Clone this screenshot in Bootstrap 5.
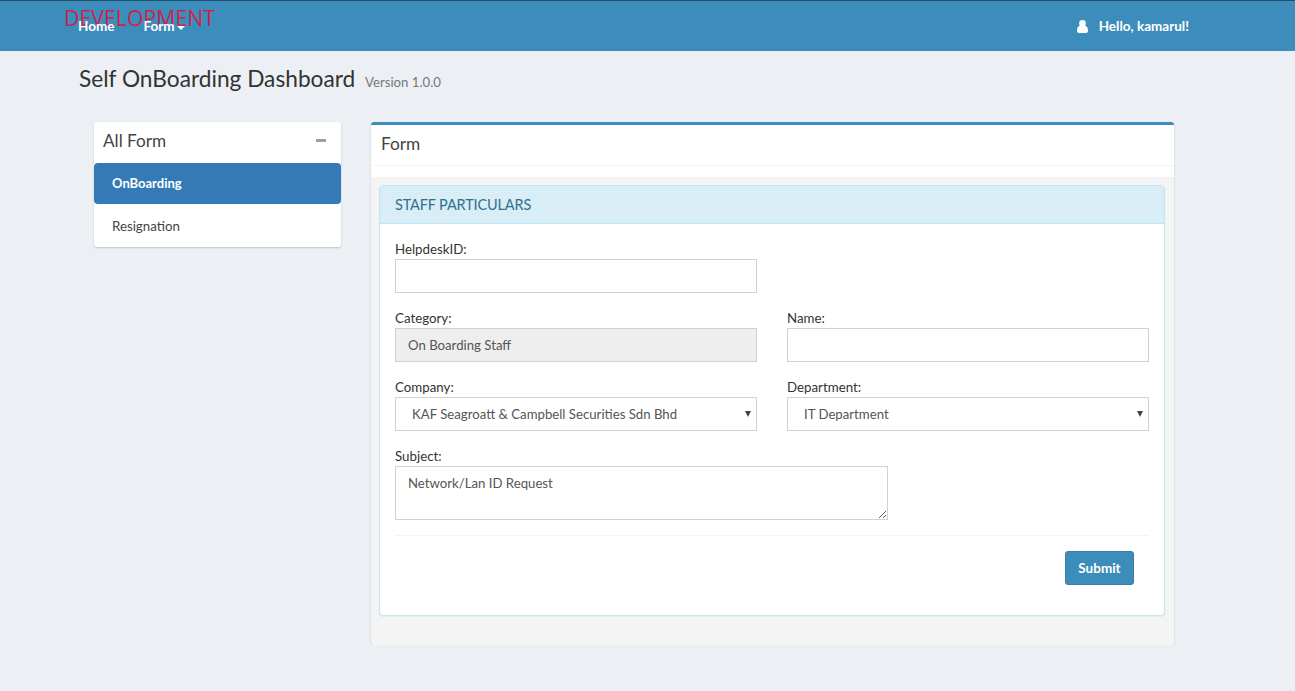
<!DOCTYPE html>
<html lang="en">
<head>
  <meta charset="UTF-8">
  <title>Self OnBoarding Dashboard</title>
  <link href="https://cdn.jsdelivr.net/npm/bootstrap@5.3.3/dist/css/bootstrap.min.css" rel="stylesheet">
  <style>
    body { background: #ecf0f5; color: #333; font-family: "Lato", "Liberation Sans", sans-serif; font-size: 14px; line-height: 20px; }
    .top-bar { height: 51px; background: #3c8dbc; border-top: 1px solid #1c4f6e; padding-left: 79px; padding-right: 106px; }
    .top-bar a { color: #fff; text-decoration: none; font-weight: 700; font-size: 13.5px; line-height: 20px; }
    .top-links { gap: 29px; padding-top: 15px; margin-left: -1px; position: relative; }
    .dev-tag { left: 64px; top: 5px; color: #c7254e; font-size: 21.3px; line-height: 24px; font-family: "Open Sans", sans-serif; }
    .caret-down { display: inline-block; border-top: 4px solid #fff; border-left: 4px solid transparent; border-right: 4px solid transparent; margin-left: 2px; vertical-align: middle; }
    .hello { padding-top: 15px; color: #fff; font-weight: 700; font-size: 13.5px; gap: 11px; }
    .page-title { padding: 14px 0 0 79px; height: 71px; }
    .page-title h1 { font-size: 22.7px; line-height: 28px; margin: 0; font-weight: 400; color: #333; }
    .page-title small { font-size: 13.2px; color: #777; margin-left: 4px; font-weight: 400; }
    .layout { padding-left: 94px; gap: 30px; align-items: flex-start; }
    .side-box { width: 247px; background: #fff; border-radius: 3px; box-shadow: 0 1px 2px rgba(0,0,0,.18); height: 125px; }
    .side-head { height: 41px; padding: 8px 15px 0 9px; font-size: 17.2px; line-height: 22px; color: #444; }
    .minus-mark { width: 10px; height: 3px; background: #97a0b3; margin-top: 9px; }
    .side-link { display: block; height: 41px; padding: 10px 18px; font-size: 13.3px; color: #444; text-decoration: none; }
    .side-link.on { background: #337ab7; color: #fff; font-size: 13px; font-weight: 700; border-radius: 4px; margin-bottom: 2px; }
    .main-box { width: 803px; height: 523px; background: #f4f4f4; border-top: 3px solid #3c8dbc; border-radius: 3px; box-shadow: 0 1px 2px rgba(0,0,0,.18); }
    .main-head { background: #fff; height: 52px; padding: 8px 10px 0; font-size: 17.3px; line-height: 22px; color: #444; }
    .main-head div { height: 33px; border-bottom: 1px solid #f4f4f4; margin: 0 -10px; padding: 0 10px; }
    .form-panel { margin: 8px 9px 0 8px; height: 431px; background: #fff; border: 1px solid #bce8f1; border-radius: 4px; box-shadow: 0 1px 1px rgba(0,0,0,.05); }
    .form-panel-head { height: 38px; background: #d9edf7; color: #31708f; font-size: 14.5px; letter-spacing: -.15px; line-height: 20px; padding: 9px 15px; border-bottom: 1px solid #bce8f1; }
    .form-panel-body { padding: 15px; }
    .form-panel-body .row { --bs-gutter-x: 30px; }
    .field-wrap { margin-bottom: 15px; }
    .field-wrap label { display: block; font-size: 13.3px; line-height: 20px; color: #333; margin: 0; }
    .form-control, .form-select { border-radius: 0; border: 1px solid #d2d2d2; height: 34px; padding: 6px 12px; font-size: 13.2px; line-height: 20px; color: #555; box-shadow: none; }
    .form-control:disabled { background: #eee; opacity: 1; }
    .form-select { padding-left: 16px; background-image: none; appearance: none; }
    textarea.form-control { height: 54px; min-height: 54px; }
    .select-wrap::after { content: ""; position: absolute; right: 6px; top: 14px; border-top: 6px solid #444; border-left: 3.5px solid transparent; border-right: 3.5px solid transparent; }
    .form-rule { margin: 0 0 15px; border: 0; border-top: 1px solid #f4f4f4; opacity: 1; }
    .submit-btn { width: 69px; height: 34px; padding: 0; background: #3c8dbc; border: 1px solid #367fa9; border-radius: 3px; color: #fff; font-size: 13.5px; font-weight: 700; margin-right: 15px; }
  </style>
</head>
<body>
  <div class="top-bar position-relative d-flex justify-content-between">
    <span class="dev-tag position-absolute">DEVELOPMENT</span>
    <div class="top-links d-flex">
      <a href="#">Home</a>
      <a href="#">Form<span class="caret-down"></span></a>
    </div>
    <div class="hello d-flex">
      <svg width="11" height="13" viewBox="0 0 11 13" class="mt-1"><circle cx="5.5" cy="3.4" r="3.3" fill="#fff"/><path d="M0 11c0-3 1-5 3-5.200 1.500 1 3.500 1 5 0 2 .2 3 2.200 3 5.200 0 1.300-.8 2-2 2H2c-1.200 0-2-.7-2-2z" fill="#fff"/></svg>
      <span>Hello, kamarul!</span>
    </div>
  </div>

  <div class="page-title">
    <h1>Self OnBoarding Dashboard <small>Version 1.0.0</small></h1>
  </div>

  <div class="layout d-flex">
    <div class="side-box">
      <div class="side-head d-flex justify-content-between">All Form <span class="minus-mark"></span></div>
      <a class="side-link on" href="#">OnBoarding</a>
      <a class="side-link" href="#">Resignation</a>
    </div>

    <div class="main-box">
      <div class="main-head"><div>Form</div></div>
      <div class="form-panel">
        <div class="form-panel-head">STAFF PARTICULARS</div>
        <div class="form-panel-body">
          <div class="row">
            <div class="col-6 field-wrap"><label>HelpdeskID:</label><input class="form-control" type="text"></div>
          </div>
          <div class="row">
            <div class="col-6 field-wrap"><label>Category:</label><input class="form-control" type="text" value="On Boarding Staff" disabled></div>
            <div class="col-6 field-wrap"><label>Name:</label><input class="form-control" type="text"></div>
          </div>
          <div class="row">
            <div class="col-6 field-wrap"><label>Company:</label>
              <div class="select-wrap position-relative"><select class="form-select"><option>KAF Seagroatt &amp; Campbell Securities Sdn Bhd</option></select></div>
            </div>
            <div class="col-6 field-wrap"><label>Department:</label>
              <div class="select-wrap position-relative"><select class="form-select"><option>IT Department</option></select></div>
            </div>
          </div>
          <div class="row">
            <div class="col-8 field-wrap"><label>Subject:</label><textarea class="form-control">Network/Lan ID Request</textarea></div>
          </div>
          <hr class="form-rule">
          <div class="d-flex justify-content-end"><button class="submit-btn" type="button">Submit</button></div>
        </div>
      </div>
    </div>
  </div>
  <script src="https://cdn.jsdelivr.net/npm/bootstrap@5.3.3/dist/js/bootstrap.bundle.min.js"></script>
</body>
</html>
